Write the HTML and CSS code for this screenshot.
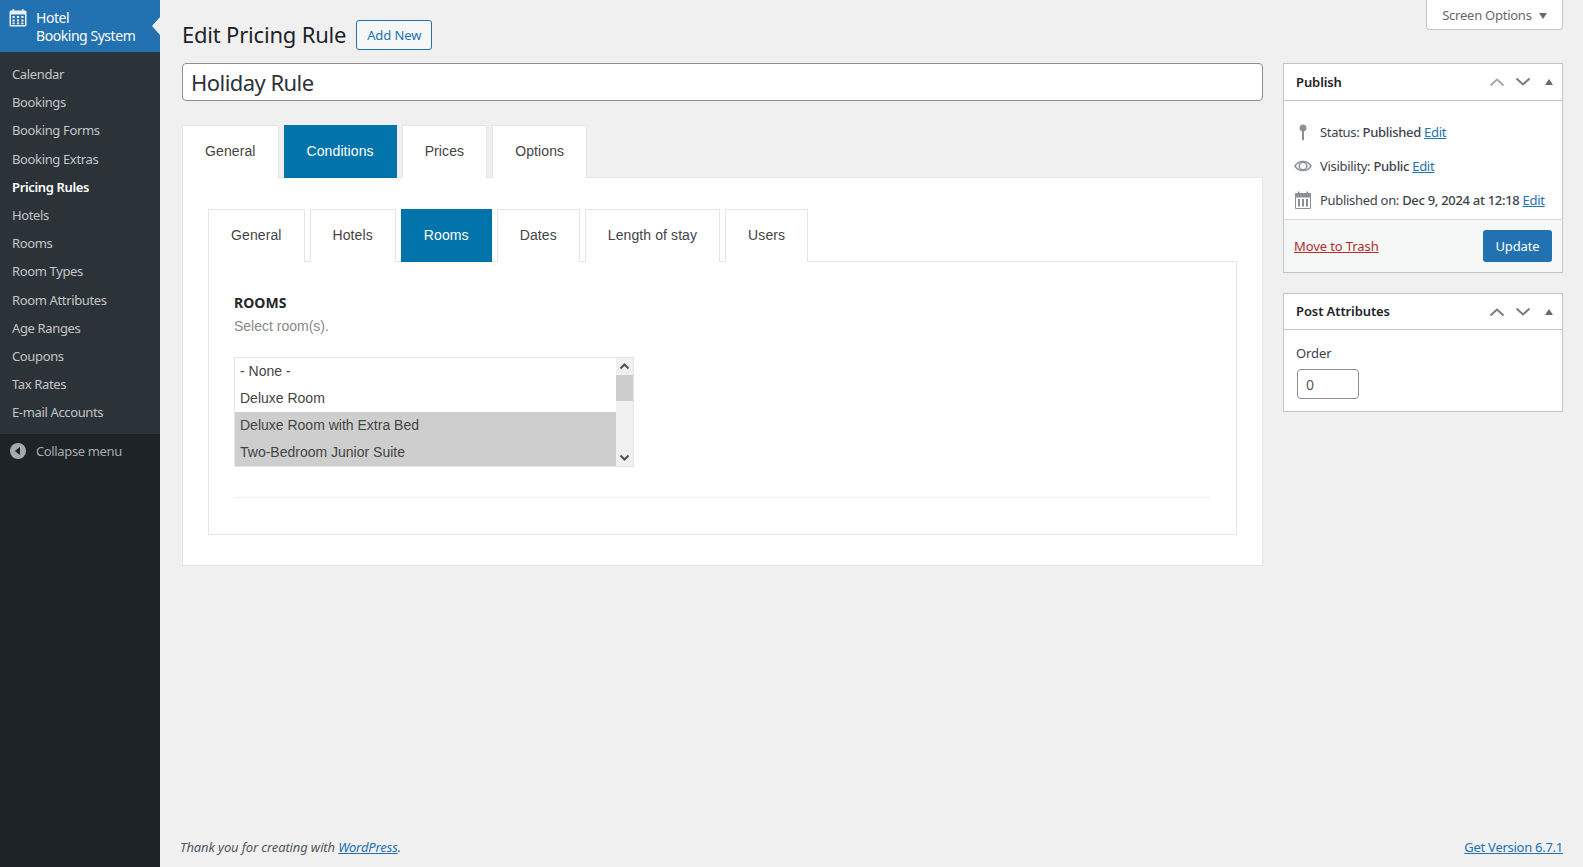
FILE: index.html
```html
<!DOCTYPE html>
<html lang="en">
<head>
<meta charset="utf-8">
<title>Edit Pricing Rule</title>
<link rel="stylesheet" href="styles.css">
</head>
<body>
<div class="shell">
  <aside class="sidebar">
    <div class="brand">
      <svg class="brand-icon" viewBox="0 0 20 20" width="20" height="20"><path fill="#f0f0f1" d="M3 2.500h1.500V1h1.600v1.500h7.800V1h1.600v1.500H17A1.500 1.500 0 0 1 18.500 4v13a1.500 1.500 0 0 1-1.500 1.500H3A1.500 1.500 0 0 1 1.500 17V4A1.500 1.500 0 0 1 3 2.500zM3 6.500V17h14V6.500zM4.500 8h2.200v2H4.500zm4.400 0h2.200v2H8.900zm4.400 0h2.200v2h-2.200zM4.500 11.500h2.200v2H4.500zm4.400 0h2.200v2H8.900zm4.400 0h2.200v2h-2.200zM4.500 14.500h2.200v1.700H4.500zm4.400 0h2.200v1.700H8.900zm4.400 0h2.200v1.700h-2.200z" fill-rule="evenodd"/></svg>
      <span class="brand-name">Hotel<br>Booking System</span>
    </div>
    <nav class="menu">
      <a>Calendar</a>
      <a>Bookings</a>
      <a>Booking Forms</a>
      <a>Booking Extras</a>
      <a class="current">Pricing Rules</a>
      <a>Hotels</a>
      <a>Rooms</a>
      <a>Room Types</a>
      <a>Room Attributes</a>
      <a>Age Ranges</a>
      <a>Coupons</a>
      <a>Tax Rates</a>
      <a>E-mail Accounts</a>
    </nav>
    <div class="collapse">
      <svg viewBox="0 0 16 16" width="16" height="16"><circle cx="8" cy="8" r="8" fill="#a7aaad"/><path d="M10 4v8L4.800 8z" fill="#1d2327"/></svg>
      <span>Collapse menu</span>
    </div>
  </aside>
  <main class="main">
    <header class="top">
      <div class="heading">
        <h1>Edit Pricing Rule</h1>
        <a class="add-new">Add New</a>
      </div>
      <button class="screen-options">Screen Options <i class="caret-down"></i></button>
    </header>
    <div class="columns">
      <div class="primary">
        <input class="title-input" type="text" value="Holiday Rule">
        <div class="tabs">
          <a class="tab">General</a>
          <a class="tab active">Conditions</a>
          <a class="tab">Prices</a>
          <a class="tab">Options</a>
        </div>
        <section class="panel">
          <div class="tabs">
            <a class="tab">General</a>
            <a class="tab">Hotels</a>
            <a class="tab active">Rooms</a>
            <a class="tab">Dates</a>
            <a class="tab">Length of stay</a>
            <a class="tab">Users</a>
          </div>
          <div class="subpanel">
            <h3>Rooms</h3>
            <p class="hint">Select room(s).</p>
            <div class="listbox">
              <ul class="options">
                <li>- None -</li>
                <li>Deluxe Room</li>
                <li class="selected">Deluxe Room with Extra Bed</li>
                <li class="selected">Two-Bedroom Junior Suite</li>
              </ul>
              <div class="scrollbar">
                <svg viewBox="0 0 17 17" width="17" height="17"><path d="M4.500 10.500 8.500 6.500l4 4" fill="none" stroke="#505050" stroke-width="2"/></svg>
                <div class="thumb"></div>
                <div class="track"></div>
                <svg viewBox="0 0 17 17" width="17" height="17"><path d="M4.500 6.500l4 4 4-4" fill="none" stroke="#505050" stroke-width="2"/></svg>
              </div>
            </div>
            <hr class="rule">
          </div>
        </section>
      </div>
      <aside class="side">
        <section class="box">
          <div class="box-head">
            <h2>Publish</h2>
            <div class="box-controls">
              <svg class="muted" viewBox="0 0 16 10" width="16" height="10"><path d="M1.500 8.500 8 2.500l6.500 6" fill="none" stroke="currentColor" stroke-width="2"/></svg>
              <svg viewBox="0 0 16 10" width="16" height="10"><path d="M1.500 1.500 8 7.500l6.500-6" fill="none" stroke="currentColor" stroke-width="2"/></svg>
              <i class="caret-up"></i>
            </div>
          </div>
          <div class="pub-rows">
            <div class="pub-row">
              <svg viewBox="0 0 20 20" width="20" height="20"><path fill="#8c8f94" d="M10 2.500a3.500 3.500 0 0 1 1 6.850V17.500l-1 1.500-1-1.500V9.350A3.500 3.500 0 0 1 10 2.500z"/></svg>
              <span>Status: <b>Published</b> <a class="link">Edit</a></span>
            </div>
            <div class="pub-row">
              <svg viewBox="0 0 20 20" width="20" height="20"><path fill="#8c8f94" fill-rule="evenodd" d="M1 10c2-3.500 5.200-5.200 9-5.200s7 1.700 9 5.200c-2 3.500-5.200 5.200-9 5.200S3 13.500 1 10zm2 0c1.300 2 3.200 3.400 5 3.900a4.200 4.200 0 0 1 0-7.800C6.200 6.600 4.300 8 3 10zm14 0c-1.300-2-3.200-3.400-5-3.900a4.200 4.200 0 0 1 0 7.800c1.800-.5 3.700-1.900 5-3.900zM10 7a3 3 0 1 1 0 6 3 3 0 0 1 0-6z"/></svg>
              <span>Visibility: <b>Public</b> <a class="link">Edit</a></span>
            </div>
            <div class="pub-row">
              <svg viewBox="0 0 20 20" width="20" height="20"><path fill="#8c8f94" fill-rule="evenodd" d="M3 3h2V1.500h1.500V3h7V1.500H15V3h2a1 1 0 0 1 1 1v14a1 1 0 0 1-1 1H3a1 1 0 0 1-1-1V4a1 1 0 0 1 1-1zm0 4.500V18h14V7.500zM5 9h2v7.500H5zm4 0h2v7.500H9zm4 0h2v7.500h-2z"/></svg>
              <span>Published on: <b>Dec 9, 2024 at 12:18</b> <a class="link">Edit</a></span>
            </div>
          </div>
          <div class="pub-actions">
            <a class="trash">Move to Trash</a>
            <button class="update">Update</button>
          </div>
        </section>
        <section class="box">
          <div class="box-head attrs">
            <h2>Post Attributes</h2>
            <div class="box-controls">
              <svg viewBox="0 0 16 10" width="16" height="10"><path d="M1.500 8.500 8 2.500l6.500 6" fill="none" stroke="currentColor" stroke-width="2"/></svg>
              <svg viewBox="0 0 16 10" width="16" height="10"><path d="M1.500 1.500 8 7.500l6.500-6" fill="none" stroke="currentColor" stroke-width="2"/></svg>
              <i class="caret-up"></i>
            </div>
          </div>
          <div class="attrs-body">
            <label class="order-label" for="order">Order</label>
            <input class="order-input" id="order" type="text" value="0">
          </div>
        </section>
      </aside>
    </div>
    <footer class="footer">
      <em>Thank you for creating with <a class="link">WordPress</a>.</em>
      <a class="link version">Get Version 6.7.1</a>
    </footer>
  </main>
</div>
</body>
</html>
```
FILE: styles.css
```css
* { box-sizing: border-box; }
html, body { margin: 0; height: 100%; }
body {
  background: #f0f0f1;
  color: #3c434a;
  font: 13px/1.4 "Noto Sans", sans-serif;
  overflow: hidden;
}
.shell { display: flex; height: 867px; }

/* Sidebar */
.sidebar {
  width: 160px;
  flex: none;
  background: #1d2327;
  color: #c3c4c7;
  display: flex;
  flex-direction: column;
  position: relative;
}
.brand {
  height: 52px;
  background: #2271b1;
  color: #fff;
  display: flex;
  padding: 8px 0 0 8px;
  position: relative;
}
.brand::after {
  content: "";
  position: absolute;
  right: 0;
  top: 17px;
  border: 9px solid transparent;
  border-left-width: 0;
  border-right: 8px solid #f0f0f1;
}
.brand-icon { flex: none; margin-right: 8px; }
.brand-name { font-size: 14px; line-height: 18px; letter-spacing: -0.45px; padding-top: 1px; }
.menu {
  background: #2c3338;
  display: flex;
  flex-direction: column;
  padding: 8px 0;
  height: 382px;
}
.menu a {
  height: 28.2px;
  line-height: 28.2px;
  padding-left: 12px;
  letter-spacing: -0.36px;
}
.menu a.current { color: #fff; font-weight: 600; }
.collapse {
  display: flex;
  align-items: center;
  gap: 10px;
  padding: 8px 0 0 10px;
  letter-spacing: -0.36px;
  color: #a7aaad;
  line-height: 18px;
}

/* Main */
.main {
  flex: 1;
  min-width: 0;
  padding: 0 20px 0 22px;
  display: flex;
  flex-direction: column;
}
.top {
  display: flex;
  justify-content: space-between;
  align-items: flex-start;
  height: 63px;
}
.heading { display: flex; align-items: flex-start; padding-top: 20px; gap: 10px; }
h1 {
  margin: 0;
  font-size: 22px;
  font-weight: 400;
  line-height: 28px;
  color: #1d2327;
  letter-spacing: -0.2px;
}
.add-new {
  width: 76px;
  height: 30px;
  border: 1px solid #2271b1;
  border-radius: 3px;
  background: #f6f7f7;
  color: #2271b1;
  text-align: center;
  line-height: 28px;
  letter-spacing: -0.1px;
}
.screen-options {
  width: 137px;
  height: 30px;
  padding: 2px 0 0;
  border: 1px solid #c3c4c7;
  border-top: 0;
  border-radius: 0 0 4px 4px;
  background: #fff;
  color: #646970;
  font: inherit;
  letter-spacing: -0.25px;
}
.caret-down {
  display: inline-block;
  margin-left: 4px;
  vertical-align: 1px;
  border: 4px solid transparent;
  border-bottom: 0;
  border-top: 6px solid #646970;
}
.columns { display: flex; gap: 20px; align-items: flex-start; }
.primary { width: 1081px; flex: none; }
.title-input {
  display: block;
  width: 100%;
  height: 38px;
  padding: 0 8px;
  border: 1px solid #8c8f94;
  border-radius: 4px;
  background: #fff;
  color: #2c3338;
  font: 22px "Noto Sans", sans-serif;
  letter-spacing: -0.55px;
}
.tabs {
  display: flex;
  gap: 5px;
  font: 14px/20px "Liberation Sans", sans-serif;
  letter-spacing: 0.1px;
}
.primary > .tabs { margin-top: 24px; }
.tab {
  height: 53px;
  padding: 15px 22px 0;
  background: #fff;
  border: 1px solid #e5e5e5;
  border-bottom: 0;
  color: #444;
}
.tab.active {
  position: relative;
  background: #0073aa;
  border-color: #0073aa;
  color: #fff;
}
.panel {
  background: #fff;
  border: 1px solid #e5e5e5;
  margin-top: -1px;
  padding: 31px 25px 30px;
  height: 389px;
}
.subpanel {
  border: 1px solid #e5e5e5;
  margin-top: -1px;
  height: 274px;
  padding: 31px 25px 0;
}
h3 {
  margin: 0;
  font-size: 14px;
  line-height: 20px;
  font-weight: 700;
  text-transform: uppercase;
  color: #23282d;
  letter-spacing: 0.05px;
}
.hint {
  margin: 3px 0 0;
  font: 14px/20px "Liberation Sans", sans-serif;
  color: #888;
}
.listbox {
  display: flex;
  width: 400px;
  height: 110px;
  margin-top: 21px;
  border: 1px solid #e5e5e5;
  font: 14px/27px "Liberation Sans", sans-serif;
}
.options {
  flex: 1;
  margin: 0;
  padding: 0;
  list-style: none;
}
.options li { height: 27px; padding-left: 5px; color: #444; }
.options li.selected { background: #cecece; }
.scrollbar {
  width: 17px;
  flex: none;
  display: flex;
  flex-direction: column;
  background: #f0f0f0;
}
.scrollbar svg { flex: none; display: block; }
.thumb { height: 26px; background: #cdcdcd; flex: none; }
.track { flex: 1; }
.rule {
  margin: 30px 0 0;
  border: 0;
  border-top: 1px solid #eee;
}

/* Side */
.side { flex: 1; min-width: 0; display: flex; flex-direction: column; gap: 20px; }
.box { background: #fff; border: 1px solid #c3c4c7; }
.box-head {
  display: flex;
  align-items: center;
  justify-content: space-between;
  height: 37px;
  padding: 0 9px 0 12px;
  border-bottom: 1px solid #c3c4c7;
}
.box-head.attrs { height: 36px; }
h2 {
  margin: 0;
  font-size: 13px;
  font-weight: 600;
  color: #1d2327;
  letter-spacing: -0.1px;
}
.box-controls { display: flex; align-items: center; gap: 10px; color: #787c82; }
.box-controls .muted { color: #a7aaad; }
.caret-up {
  margin: 0 0 0 4px;
  border: 4px solid transparent;
  border-top: 0;
  border-bottom: 6px solid #646970;
}
.pub-rows {
  padding: 14px 0 0;
  height: 119px;
  border-bottom: 1px solid #dcdcde;
}
.pub-row {
  display: flex;
  align-items: center;
  gap: 7px;
  height: 34px;
  padding-left: 9px;
  letter-spacing: -0.3px;
}
.pub-row svg { flex: none; }
.pub-row b { font-weight: 500; }
.link { color: #2271b1; text-decoration: underline; }
.pub-actions {
  height: 52px;
  background: #f6f7f7;
  display: flex;
  align-items: center;
  justify-content: space-between;
  padding: 0 10px;
}
.trash { color: #b32d2e; text-decoration: underline; letter-spacing: -0.1px; }
.update {
  width: 69px;
  height: 32px;
  border: 0;
  border-radius: 3px;
  background: #2271b1;
  color: #fff;
  font: inherit;
  letter-spacing: -0.1px;
}
.attrs-body { padding: 14px 12px 12px; }
.order-label { display: block; line-height: 18px; letter-spacing: -0.1px; }
.order-input {
  display: block;
  width: 62px;
  height: 30px;
  margin: 7px 0 0 1px;
  padding: 0 8px;
  border: 1px solid #8c8f94;
  border-radius: 4px;
  color: #50575e;
  font: 14px "Noto Sans", sans-serif;
}

/* Footer */
.footer {
  margin-top: auto;
  display: flex;
  justify-content: space-between;
  padding: 0 0 11px 0;
  margin-left: -2px;
  line-height: 18px;
  color: #50575e;
  letter-spacing: -0.13px;
}
.version { letter-spacing: -0.27px; }
```
